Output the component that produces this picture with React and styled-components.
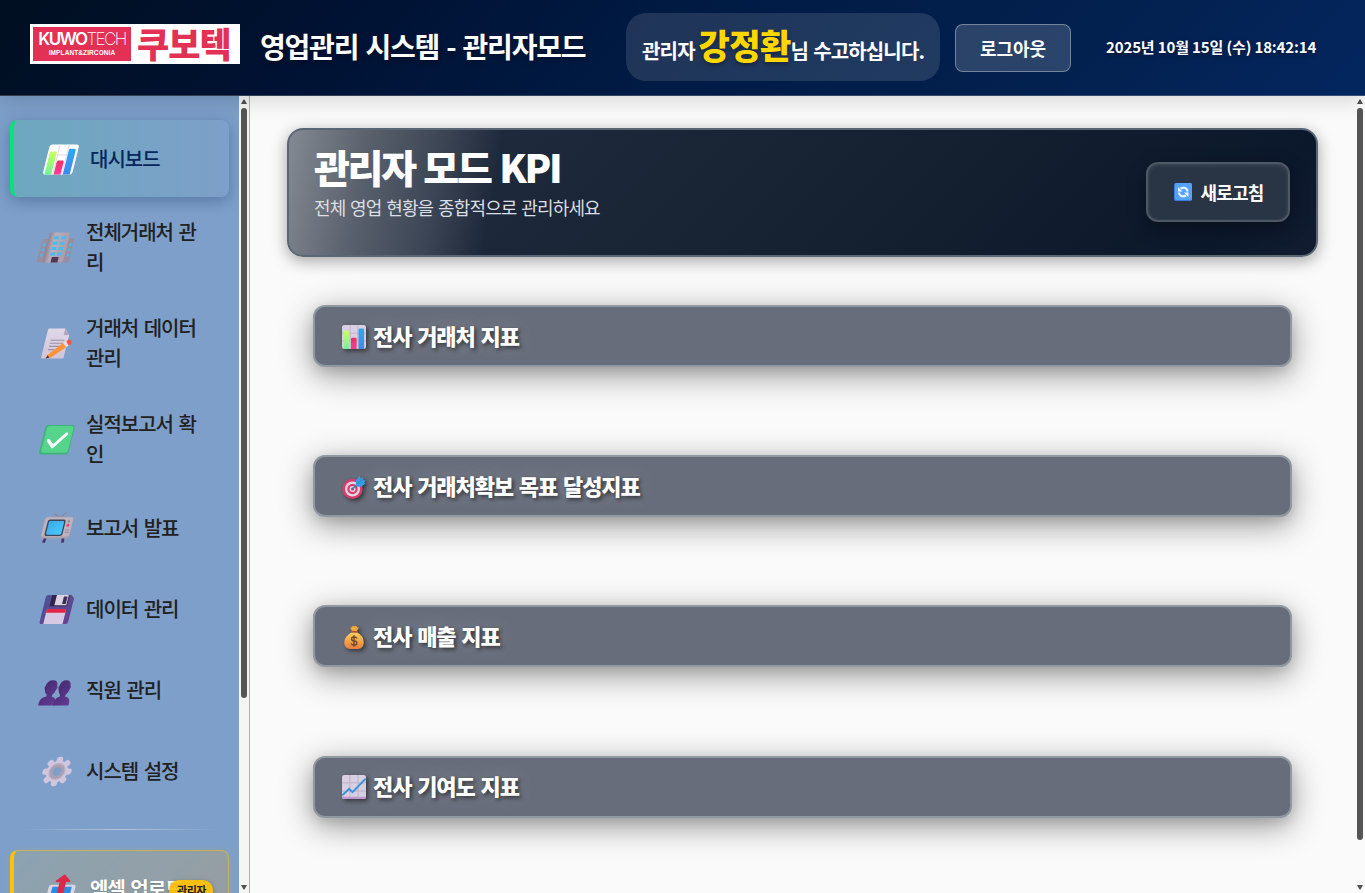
import React from 'react';
import styled, { createGlobalStyle, css } from 'styled-components';

const GlobalStyle = createGlobalStyle`
  * { box-sizing: border-box; }
  body {
    margin: 0;
    overflow: hidden;
    background: #fafafa;
    font-family: "Noto Sans CJK KR", "Noto Sans", sans-serif;
  }
`;

/* Text whose tracking is tuned for Korean headings and labels */
const Label = styled.span`
  display: block;
  white-space: ${p => (p.$wrap ? 'pre-line' : 'nowrap')};
  font-size: ${p => p.$size}px;
  line-height: ${p => p.$line}px;
  font-weight: ${p => p.$weight || 400};
  letter-spacing: ${p => p.$track || 0}px;
  word-spacing: ${p => p.$word || 0}px;
  color: ${p => p.$color || '#fff'};
  text-shadow: ${p => p.$shadow || 'none'};
`;

const Page = styled.div`
  width: 1365px;
  height: 893px;
  display: flex;
  flex-direction: column;
  overflow: hidden;
`;

/* ---------- header ---------- */
const Header = styled.header`
  position: relative;
  z-index: 2;
  flex: none;
  height: 96px;
  display: flex;
  align-items: center;
  padding-left: 30px;
  border-bottom: 1px solid rgba(255, 255, 255, 0.2);
  background: linear-gradient(135deg, #000f20 0%, #001233 25%, #001b44 50%, #03214f 78%, #03265f 100%);
  box-shadow: 0 4px 20px rgba(0, 0, 0, 0.15);
`;

const Logo = styled.div`
  width: 210px;
  height: 40px;
  margin-bottom: 7px;
  padding: 3px;
  background: #fff;
  display: flex;
`;

const LogoBox = styled.div`
  width: 98px;
  height: 34px;
  background: #e23155;
  color: #fff;
  display: flex;
  flex-direction: column;
  align-items: center;
  font-family: "Liberation Sans", sans-serif;
`;

const LogoName = styled.div`
  margin-top: 3px;
  font-size: 17px;
  line-height: 19px;
  letter-spacing: -1.6px;
  white-space: nowrap;
  font-family: Inter, sans-serif;
  font-weight: 600;
  span { font-weight: 200; }
`;

const LogoTag = styled.div`
  font-size: 6.5px;
  line-height: 7px;
  font-weight: 700;
  letter-spacing: 0.1px;
  white-space: nowrap;
`;

const LogoKorean = styled.div`
  margin-left: 6px;
  color: #e23155;
  font-size: 35px;
  line-height: 31px;
  font-weight: 900;
  letter-spacing: -1px;
`;

const HeaderTitle = styled.div`
  width: 386px;
  margin-bottom: 3px;
  padding-left: 20px;
`;

const Greeting = styled.div`
  width: 314px;
  height: 68px;
  margin-bottom: 1px;
  padding-left: 16px;
  display: flex;
  align-items: baseline;
  border-radius: 20px;
  background: rgba(255, 255, 255, 0.12);
`;

const Logout = styled.button`
  width: 116px;
  height: 48px;
  margin-left: 15px;
  padding: 0;
  display: flex;
  justify-content: center;
  align-items: center;
  font-family: inherit;
  border: 1px solid rgba(255, 255, 255, 0.35);
  border-radius: 8px;
  background: rgba(255, 255, 255, 0.16);
`;

const Clock = styled.div`
  margin-left: 35px;
  margin-bottom: 2px;
`;

/* ---------- body ---------- */
const Body = styled.div`
  flex: 1;
  display: flex;
  min-height: 0;
`;

const Sidebar = styled.aside`
  width: 239px;
  padding: 24px 10px 0;
  background: #7d9fc9;
  overflow: hidden;
`;

const activeItem = css`
  padding-left: 29px;
  border-left: 4px solid #00e676;
  background: linear-gradient(90deg, rgba(0, 230, 118, 0.13), rgba(125, 159, 201, 0));
  background-color: #7d9fc9;
  box-shadow: 0 4px 15px rgba(0, 30, 80, 0.3);
`;

const uploadItem = css`
  padding-left: 29px;
  border: 1px solid rgba(255, 193, 7, 0.5);
  border-left: 4px solid #ffc107;
  background: linear-gradient(135deg, rgba(255, 193, 7, 0.12), rgba(255, 152, 0, 0.2));
  box-shadow: 0 2px 10px rgba(255, 193, 7, 0.15);
`;

const NavItem = styled.div`
  position: relative;
  height: ${p => (p.$tall ? 92 : 77)}px;
  margin-bottom: 4px;
  padding-left: 29px;
  display: flex;
  align-items: center;
  gap: 12px;
  border-radius: 8px;
  ${p => p.$kind === 'active' && activeItem}
  ${p => p.$kind === 'upload' && uploadItem}
`;

const NavIcon = styled.svg`
  flex: none;
  width: 35px;
  height: 32px;
  overflow: visible;
`;

const Divider = styled.div`
  height: 1px;
  margin: 20px 10px 20px;
  background: linear-gradient(90deg, transparent, rgba(255, 255, 255, 0.4), transparent);
`;

const Badge = styled.div`
  position: absolute;
  right: 15px;
  top: 29px;
  width: 44px;
  height: 20px;
  padding-left: 1px;
  display: flex;
  justify-content: center;
  border-radius: 10px;
  background: rgba(255, 193, 7, 0.92);
  box-shadow: 0 1px 4px rgba(0, 0, 0, 0.25);
`;

const Rail = styled.div`
  flex: none;
  width: ${p => p.$width}px;
  display: flex;
  flex-direction: column;
  align-items: center;
  background: ${p => p.$bg};
  border-right: ${p => (p.$line ? '1px solid #9db3d2' : '0')};
`;

const RailArrow = styled.svg`
  width: 8px;
  height: 5px;
  margin: ${p => (p.$down ? '0 0 3px' : '3px 0 0')};
`;

const Thumb = styled.div`
  width: 6px;
  height: ${p => p.$height}px;
  margin-top: 4px;
  border-radius: 3px;
  background: #555;
`;

const Spacer = styled.div`
  flex: 1;
`;

const Main = styled.main`
  flex: 1;
  padding: 32px 37px 0;
  background: #fafafa;
`;

const Hero = styled.section`
  height: 129px;
  padding: 13px 26px 0 25px;
  display: flex;
  justify-content: space-between;
  border: 2px solid #5b6675;
  border-radius: 16px;
  background:
    linear-gradient(100deg, rgba(255, 255, 255, 0.45) 0, rgba(255, 255, 255, 0.26) 80px, rgba(255, 255, 255, 0.13) 155px, rgba(255, 255, 255, 0) 212px),
    linear-gradient(135deg, #1f2937 0%, #1e293b 20%, #14202f 60%, #0b182b 90%, #111c30 100%);
  box-shadow: 0 4px 16px rgba(0, 0, 0, 0.35);
`;

const Refresh = styled.button`
  width: 144px;
  height: 60px;
  margin-top: 19px;
  padding: 0 0 0 2px;
  display: flex;
  align-items: center;
  justify-content: center;
  gap: 8px;
  font-family: inherit;
  border: 2px solid #4e5966;
  border-radius: 12px;
  background: #293444;
  box-shadow: 0 6px 18px rgba(0, 0, 0, 0.35), inset 0 1px 4px rgba(255, 255, 255, 0.12);
`;

const Cards = styled.div`
  padding: 48px 26px 0;
  display: flex;
  flex-direction: column;
  gap: 88.2px;
`;

const Card = styled.section`
  height: 62px;
  padding-left: 27px;
  display: flex;
  align-items: center;
  gap: 7px;
  border: 2px solid #9098a2;
  border-radius: 12px;
  background: #676d7a;
  box-shadow: 0 8px 32px rgba(0, 0, 0, 0.4), 0 4px 12px rgba(0, 0, 0, 0.1);
  ${Label} { margin-bottom: 3px; }
`;

const CardIcon = styled.svg`
  width: 24px;
  height: 24px;
  margin-top: 1px;
  overflow: visible;
  filter: drop-shadow(2px 2px 2px rgba(0, 0, 0, 0.5)) saturate(0.92);
`;

/* ---------- drawings, all on a 32 x 32 field ---------- */
const DefsSvg = styled.svg`
  position: absolute;
`;

const Defs = () => (
  <DefsSvg width="0" height="0">
    <defs>
      <linearGradient id="lime" x1="0" y1="0" x2="0" y2="1"><stop offset="0" stopColor="#c9ff5a" /><stop offset="1" stopColor="#6ff29a" /></linearGradient>
      <linearGradient id="pink" x1="0" y1="0" x2="0" y2="1"><stop offset="0" stopColor="#f02f6a" /><stop offset="1" stopColor="#fa3f94" /></linearGradient>
      <linearGradient id="blue" x1="0" y1="0" x2="0" y2="1"><stop offset="0" stopColor="#2aa9f5" /><stop offset="1" stopColor="#4088ee" /></linearGradient>
      <linearGradient id="paper" x1="0" y1="0" x2="0" y2="1"><stop offset="0" stopColor="#e0d9e8" /><stop offset="1" stopColor="#cfc4d8" /></linearGradient>
      <linearGradient id="screen" x1="0" y1="0" x2="1" y2="1"><stop offset="0" stopColor="#3aa7e6" /><stop offset="1" stopColor="#4ccaff" /></linearGradient>
      <linearGradient id="violet" x1="0" y1="0" x2="1" y2="1"><stop offset="0" stopColor="#432a6e" /><stop offset="1" stopColor="#653b94" /></linearGradient>
      <linearGradient id="floppy" x1="0" y1="0" x2="1" y2="1"><stop offset="0" stopColor="#4d5296" /><stop offset="1" stopColor="#67428f" /></linearGradient>
      <linearGradient id="gold" x1="0" y1="0" x2="0" y2="1"><stop offset="0" stopColor="#ffd052" /><stop offset="1" stopColor="#ee7d38" /></linearGradient>
      <linearGradient id="wall" x1="0" y1="0" x2="1" y2="0"><stop offset="0" stopColor="#8d8392" /><stop offset="0.3" stopColor="#b9aebd" /><stop offset="1" stopColor="#aa9dad" /></linearGradient>
    </defs>
  </DefsSvg>
);

const BarsArt = ({ bg = '#d9d0e2', line = '#c3b7d0' }) => (
  <g>
    <rect width="32" height="32" rx="3" fill={bg} />
    <path d="M0 11H32M0 21H32M11 0V32M21 0V32" stroke={line} strokeWidth="1.3" />
    <path d="M2 9a1.5 1.5 0 0 1 1.5-1.5H8A1.5 1.5 0 0 1 9.500 9V32H3a1 1 0 0 1-1-1z" fill="url(#lime)" />
    <path d="M12 18.500a1.500 1.500 0 0 1 1.500-1.500H18a1.500 1.500 0 0 1 1.500 1.500V32H12z" fill="url(#pink)" />
    <path d="M22 6a1.500 1.500 0 0 1 1.500-1.500H28A1.500 1.500 0 0 1 29.500 6V32H22z" fill="url(#blue)" />
  </g>
);

const BuildingArt = () => (
  <g>
    <path d="M-1.500 8q0-1 1-1H6v25H-2.500zM25 6h6.500q1 0 1 1v25h-7.500z" fill="#988e9f" />
    <rect x="4.500" y="0" width="22" height="32" rx="1.500" fill="url(#wall)" />
    <path d="M10.500 4h5v3.200h-5zM18 4h5v3.200h-5zM10.500 9.800h5v3.200h-5zM18 9.800h5v3.200h-5zM10.500 15.500h5v3.200h-5zM18 15.500h5v3.200h-5zM10.500 21.300h5v3.200h-5zM18 21.300h5v3.200h-5z" fill="#42bef2" />
    <path d="M0 11.500h2.500v3H0zM0 17h2.500v3H0zM0 22.500h2.500v3H0zM28.500 11.500h2.500v3h-2.500zM28.500 17h2.500v3h-2.500zM28.500 22.500h2.500v3h-2.500z" fill="#42bef2" />
    <rect x="13" y="26" width="7.500" height="6" fill="#4c3a56" />
  </g>
);

const MemoArt = () => (
  <g>
    <path d="M4 0h17l6 7v25H4q-1.500 0-1.500-1.500V1.500Q2.500 0 4 0z" fill="url(#paper)" />
    <path d="M21 0v7h6z" fill="#b0a4bc" />
    <path d="M8 12.500H23M8 15.700H23M8 19H20M8 22.500H15" stroke="#9d93a8" strokeWidth="1.200" />
    <path d="M9 28l14-13 4.500 4.500L13.500 30.500 8 32z" fill="#ff9238" />
    <path d="M22.500 15.500l3-2.500 4.500 4.500-3 2.500z" fill="#e9dcea" />
    <path d="M25.500 13.500l2-1.500q2-.5 3.500 1.200t0 3.500l-2 1.500z" fill="#f4533f" />
    <path d="M9 28.500l-1.500 3.500 4-1z" fill="#52373f" />
  </g>
);

const CheckArt = () => (
  <g>
    <rect x="0" y="0.500" width="32" height="31.500" rx="3" fill="#3fb37a" />
    <rect x="2" y="1.500" width="29" height="28.500" rx="2.500" fill="#57d48c" />
    <path d="M7 17l6 6.500L25 10" fill="none" stroke="#f7fff9" strokeWidth="3.400" strokeLinecap="round" strokeLinejoin="round" />
  </g>
);

const TvArt = () => (
  <g>
    <path d="M15 4L9 0M17 4l5-5" stroke="#8d8490" strokeWidth="1.200" />
    <path d="M6 26l-1 5M25 26l1 5" stroke="#49356a" strokeWidth="3" />
    <rect x="0" y="3.500" width="31.500" height="23" rx="3" fill="#aaa0ad" />
    <rect x="1" y="4" width="30" height="20.500" rx="2.500" fill="#bdb2bd" />
    <rect x="4" y="6.500" width="19.500" height="17.500" rx="2.500" fill="#3b4658" />
    <rect x="5.500" y="8" width="16.500" height="14.500" rx="1.500" fill="url(#screen)" />
    <circle cx="27" cy="8.500" r="1.200" fill="#8b8090" />
    <circle cx="27" cy="12.500" r="1.600" fill="#ee3d6d" />
    <path d="M25.500 17.500h4M25.500 20h4" stroke="#958a98" />
  </g>
);

const FloppyArt = () => (
  <g>
    <path d="M3 .5H28l3.500 3.500V29a2.500 2.500 0 0 1-2.500 2.500H3A2.500 2.500 0 0 1 .5 29V3A2.500 2.500 0 0 1 3 .5z" fill="url(#floppy)" />
    <rect x="7" y=".5" width="19" height="12" fill="#30234e" />
    <rect x="12" y=".5" width="13" height="11" fill="#dcd4e2" />
    <rect x="20" y="2" width="4" height="8" fill="#3d2c57" />
    <path d="M5 17a1.500 1.500 0 0 1 1.500-1.500h18A1.500 1.500 0 0 1 26 17V31.500H5z" fill="#d5c9e3" />
    <path d="M5 19.500V17a1.500 1.500 0 0 1 1.500-1.500h18A1.500 1.500 0 0 1 26 17v2.500z" fill="#e32647" />
  </g>
);

const PeopleArt = () => (
  <g fill="url(#violet)" transform="translate(0 4)">
    <path d="M2.500 7Q3 1 9 1t6 6q1.500 1.500 0 4-1 4-3 5.500v2q4 .5 5 4.500V28H-.5v-3q.5-6 6.500-6.500v-2Q3.500 15 2.500 11 1 8.500 2.500 7z" />
    <path d="M17.500 7Q18 1 23.500 1t6 6q1.500 1.500 0 4-1 4-3 5.500v2q5.500.5 6 6.500v3H16v-5q1-4 4.500-4.500v-2Q18.500 15 17.500 11q-1.500-2.500 0-4z" />
  </g>
);

const GearArt = () => (
  <g>
    <g fill="#d2c6df">
      <circle cx="16" cy="16" r="11.500" />
      {[0, 45, 90, 135, 180, 225, 270, 315].map(a => (
        <rect key={a} x="12.700" y="0.300" width="6.600" height="8" rx="2.600" transform={`rotate(${a} 16 16)`} />
      ))}
    </g>
    <circle cx="16" cy="16" r="6.300" fill="#7d9fc9" stroke="#a9a0b5" strokeWidth="3.600" />
    <circle cx="16" cy="16" r="8.500" fill="none" stroke="#b8aec3" />
  </g>
);

const OutboxArt = () => (
  <g>
    <path d="M5 11h24q2 0 2 2v17q0 2-2 2H4q-2 0-2-2V13q0-2 3-2z" fill="#dcd5e4" />
    <path d="M6 13h21v19H6z" fill="#2d8be0" />
    <path d="M12.500 26V8H8.500q-1-.5 0-1.500L15 .5q1-.8 2 0l6.500 6q1 1 0 1.500h-4v18z" fill="#dd2849" />
  </g>
);

const TargetArt = () => (
  <g>
    <circle cx="14" cy="18.500" r="13.500" fill="#e8386c" />
    <circle cx="14" cy="18.500" r="10" fill="#e4d9e6" />
    <circle cx="14" cy="18.500" r="7" fill="#e8386c" />
    <circle cx="14" cy="18.500" r="4" fill="#e4d9e6" />
    <circle cx="14" cy="18.500" r="2" fill="#c32f60" />
    <path d="M14 18.500L24 9" stroke="#2582cf" strokeWidth="2" />
    <path d="M18.500 13.500V7L23.500 1l1.500 4L28 2.500 28.500 6.500l3.500 1-3 2 2.500 1.500-6 4.500h-5z" fill="#339bee" />
    <path d="M20 12L28 5" stroke="#1f78c4" />
  </g>
);

const MoneyArt = () => (
  <g>
    <path d="M11 3q2 1 2.500-1 2-2 3 0 2-2 3 0 1 2 3 1-.5 3-3 5h-6q-2-2-2.500-5z" fill="#f5a834" />
    <path d="M13 9.500h7q9 5 9 13.500 0 8-7 9H10q-7-1-7-9 0-8 10-13.500z" fill="url(#gold)" />
    <path d="M12.500 9h8" stroke="#bd4930" strokeWidth="2" strokeLinecap="round" />
    <path d="M20 18q-1-2-4-2-3.200 0-3.200 2.500t3.400 2.800q3.600.3 3.600 2.900t-3.800 2.600q-3 0-3.800-2M16 13.500v15.500" fill="none" stroke="#71472b" strokeWidth="1.800" />
  </g>
);

const TrendArt = () => (
  <g>
    <rect width="32" height="32" rx="3" fill="#d9cfe2" />
    <path d="M0 29.500q0 2.500 3 2.500h26q3 0 3-2.500V29H0z" fill="#bf98d4" />
    <path d="M0 10.500H32M0 21.500H32M10.500 0V29M21.500 0V29" stroke="#c0b1cc" strokeWidth="1.300" />
    <path d="M.5 27l9-8.500 4.500 4.500L31.500 5" fill="none" stroke="#2f94e0" strokeWidth="2.400" />
  </g>
);

const Skewed = ({ children }) => (
  <NavIcon viewBox="0 0 35 32">
    <g transform="translate(7 1.500) skewX(-14) scale(0.920 0.940)">{children}</g>
  </NavIcon>
);

const RefreshArt = () => (
  <svg width="18" height="18" viewBox="0 0 18 18">
    <rect width="18" height="18" rx="1.500" fill="#3d79de" />
    <rect x="1" width="17" height="17" rx="1.500" fill="#55a2fb" />
    <g fill="none" stroke="#f2f4ff" strokeWidth="2">
      <path d="M6.500 5.500Q12.500 3 13.700 8.500M12 12.500Q6 15 4.800 9.500" />
    </g>
    <path d="M4 4v4.500h4.500zM14.500 14V9.500H10z" fill="#f2f4ff" />
  </svg>
);

const Arrow = ({ down }) => (
  <RailArrow $down={down} viewBox="0 0 8 5">
    <path d={down ? 'M1 0H7L4.500 4.500H3.500Z' : 'M1 5H7L4.500 .5H3.500Z'} fill="#505050" />
  </RailArrow>
);

const ScrollRail = ({ width, bg, line, thumb }) => (
  <Rail $width={width} $bg={bg} $line={line}>
    <Arrow />
    <Thumb $height={thumb} />
    <Spacer />
    <Arrow down />
  </Rail>
);

const menu = [
  { text: '전체거래처 관\n리', art: <BuildingArt />, tall: true },
  { text: '거래처 데이터\n관리', art: <MemoArt />, tall: true },
  { text: '실적보고서 확\n인', art: <CheckArt />, tall: true },
  { text: '보고서 발표', art: <TvArt /> },
  { text: '데이터 관리', art: <FloppyArt /> },
  { text: '직원 관리', art: <PeopleArt /> },
  { text: '시스템 설정', art: <GearArt /> },
];

const cards = [
  { text: '전사 거래처 지표', art: <BarsArt /> },
  { text: '전사 거래처확보 목표 달성지표', art: <TargetArt /> },
  { text: '전사 매출 지표', art: <MoneyArt /> },
  { text: '전사 기여도 지표', art: <TrendArt /> },
];

const softShadow = '0 2px 4px rgba(0,0,0,0.35)';

export default function App() {
  return (
    <Page>
      <GlobalStyle />
      <Defs />
      <Header>
        <Logo>
          <LogoBox>
            <LogoName>KUWO<span>TECH</span></LogoName>
            <LogoTag>IMPLANT&amp;ZIRCONIA</LogoTag>
          </LogoBox>
          <LogoKorean>쿠보텍</LogoKorean>
        </Logo>
        <HeaderTitle>
          <Label $size={28} $line={40} $weight={700} $track={-1.2} $word={2} $shadow={softShadow}>영업관리 시스템 - 관리자모드</Label>
        </HeaderTitle>
        <Greeting>
          <Label $size={20} $line={64} $weight={700} $track={-0.8}>관리자&nbsp;</Label>
          <Label $size={34} $line={64} $weight={900} $track={-0.6} $color="#ffd700" $shadow={softShadow}>강정환</Label>
          <Label $size={20} $line={64} $weight={700} $track={-0.85} $word={1.3}>님 수고하십니다.</Label>
        </Greeting>
        <Logout><Label $size={18} $line={26} $weight={700} $track={0}>로그아웃</Label></Logout>
        <Clock>
          <Label $size={15} $line={24} $weight={700} $track={-0.14} $shadow={softShadow}>2025년 10월 15일 (수) 18:42:14</Label>
        </Clock>
      </Header>
      <Body>
        <Sidebar>
          <NavItem $kind="active">
            <Skewed><BarsArt bg="#fff" line="#eadff0" /></Skewed>
            <Label $size={20} $line={30} $weight={500} $track={-1} $color="#06265c">대시보드</Label>
          </NavItem>
          {menu.map(m => (
            <NavItem key={m.text} $tall={m.tall}>
              <Skewed>{m.art}</Skewed>
              <Label $wrap $size={20} $line={30} $weight={500} $track={-1} $word={2} $color="#212121">{m.text}</Label>
            </NavItem>
          ))}
          <Divider />
          <NavItem $kind="upload">
            <Skewed><OutboxArt /></Skewed>
            <Label $size={20} $line={30} $weight={700} $track={-1} $word={2} $shadow="0 1px 2px rgba(0,0,0,0.2)">엑셀 업로드</Label>
            <Badge><Label $size={11} $line={20} $weight={700} $track={-0.5} $color="#222">관리자</Label></Badge>
          </NavItem>
        </Sidebar>
        <ScrollRail width={11} bg="#f5f5f5" line thumb={590} />
        <Main>
          <Hero>
            <div>
              <Label $size={39} $line={46} $weight={900} $track={-2.3} $word={2}>관리자 모드 KPI</Label>
              <Label $size={18} $line={37} $track={-0.85} $word={1.5} $color="#dcdfe3">전체 영업 현황을 종합적으로 관리하세요</Label>
            </div>
            <Refresh>
              <RefreshArt />
              <Label $size={18} $line={26} $weight={700} $track={-0.8}>새로고침</Label>
            </Refresh>
          </Hero>
          <Cards>
            {cards.map(c => (
              <Card key={c.text}>
                <CardIcon viewBox="0 0 32 32">{c.art}</CardIcon>
                <Label $size={22} $line={32} $weight={900} $track={-1.08} $word={1.9} $shadow="2px 2px 4px rgba(0,0,0,0.6), 0 0 20px rgba(255,255,255,0.2)">{c.text}</Label>
              </Card>
            ))}
          </Cards>
        </Main>
        <ScrollRail width={10} bg="#fafafa" thumb={732} />
      </Body>
    </Page>
  );
}
